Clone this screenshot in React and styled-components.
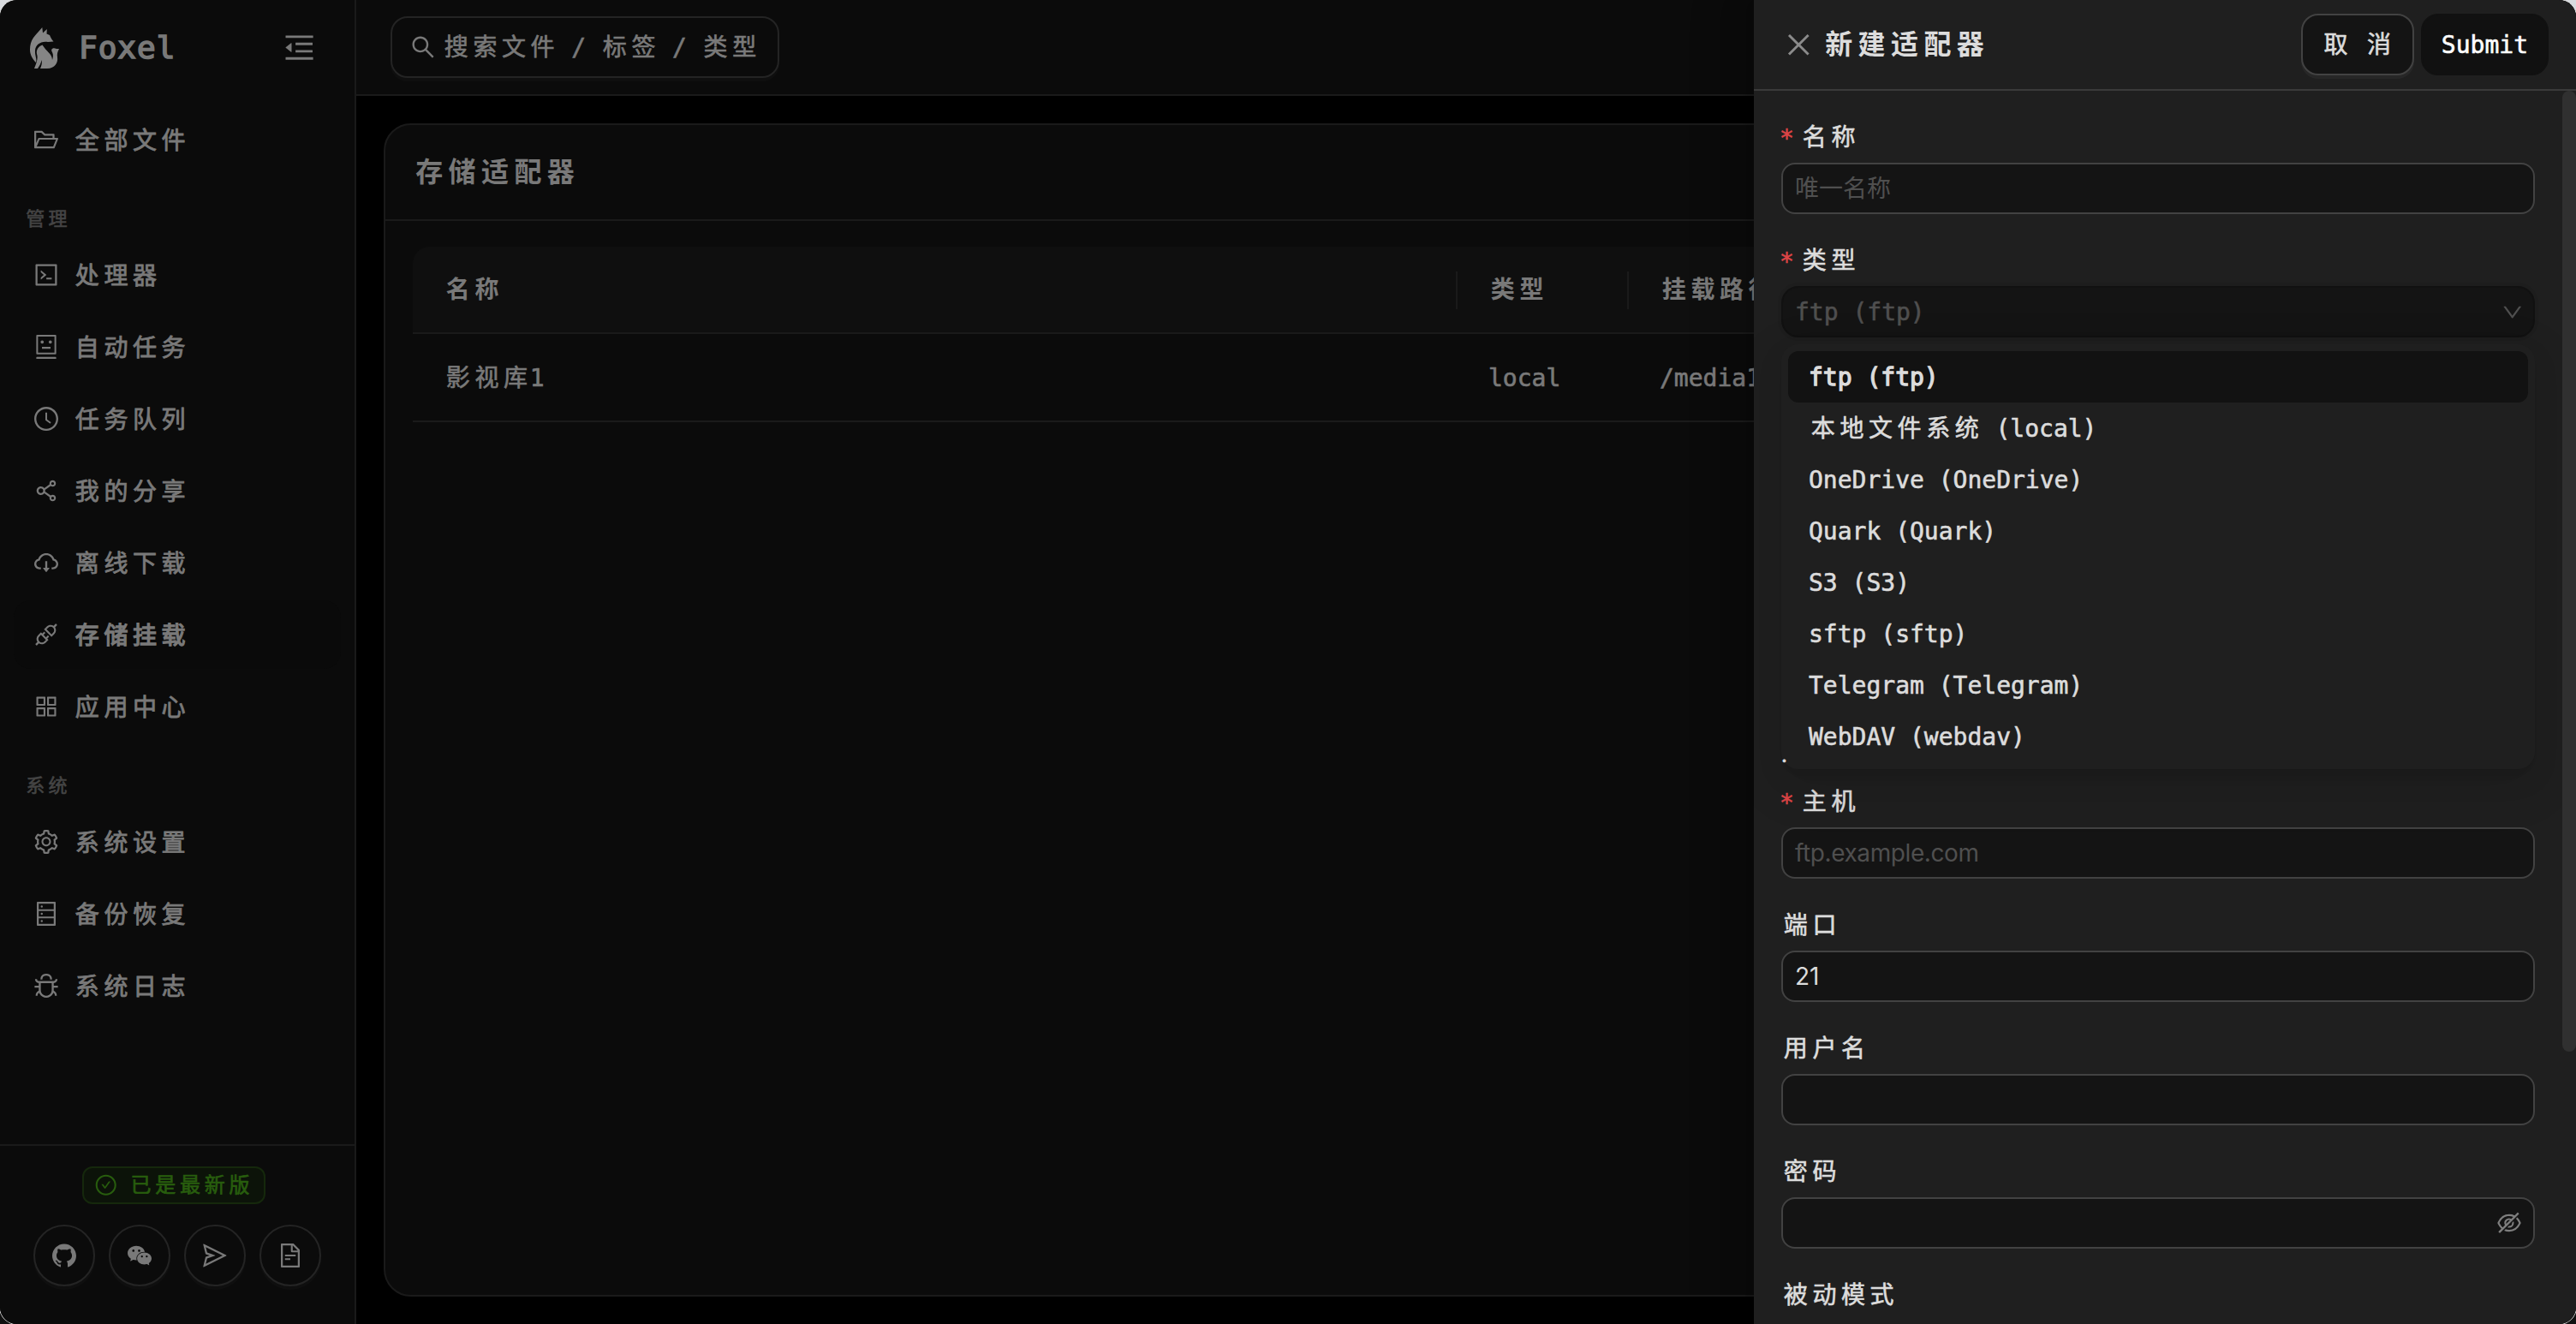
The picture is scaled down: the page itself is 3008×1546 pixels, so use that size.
import React from "react";
import styled, { createGlobalStyle } from "styled-components";
import {
  AiFillWechat,
  AiOutlineApi,
  AiOutlineAppstore,
  AiOutlineBug,
  AiOutlineCheckCircle,
  AiOutlineClockCircle,
  AiOutlineClose,
  AiOutlineCloudDownload,
  AiOutlineCode,
  AiOutlineDatabase,
  AiOutlineDown,
  AiOutlineEyeInvisible,
  AiOutlineFileText,
  AiOutlineFolderOpen,
  AiOutlineGithub,
  AiOutlineMenuFold,
  AiOutlineRobot,
  AiOutlineSearch,
  AiOutlineSend,
  AiOutlineSetting,
  AiOutlineShareAlt,
} from "react-icons/ai";

const GlobalStyle = createGlobalStyle`
  * {
    box-sizing: border-box;
  }

  body {
    margin: 0;
    background: linear-gradient(#d9dbdf 773px, #101010 773px);
    overflow: hidden;
    font-family: "DejaVu Sans Mono", "Noto Sans CJK SC", monospace;
    font-size: 28px;
    line-height: 44px;
    color: #dcdcdc;
    white-space: pre;
    -webkit-text-stroke: 0.6px;
  }

  svg {
    -webkit-text-stroke: 0;
  }
`;

const Window = styled.div`
  position: relative;
  display: flex;
  width: 3008px;
  height: 1546px;
  background: #000;
  border-radius: 20px;
  box-shadow: 0 0 0 1px #d0d0d0;
  overflow: hidden;
`;

// The Chinese glyphs sit in the middle of a cell that is two Latin letters wide
const Zh = styled.span`
  font-family: "Noto Sans CJK SC", sans-serif;
  line-height: 1;
  letter-spacing: 0.2em;
  margin-left: 0.1em;
  margin-right: -0.1em;
`;

function Text({ children }) {
  return children
    .split(/([\u4e00-\u9fff]+)/)
    .filter(Boolean)
    .map((part, index) =>
      /[\u4e00-\u9fff]/.test(part) ? (
        <Zh key={index}>{part}</Zh>
      ) : (
        <React.Fragment key={index}>{part}</React.Fragment>
      )
    );
}

const Icon = styled.span`
  display: inline-flex;
  align-items: center;
  justify-content: center;
  flex: none;
  width: ${(p) => p.$size || 28}px;
  height: ${(p) => p.$size || 28}px;

  svg {
    flex: none;
    width: ${(p) => ((p.$size || 28) * 8) / 7}px;
    height: ${(p) => ((p.$size || 28) * 8) / 7}px;
  }
`;

/* Sidebar */

const Sidebar = styled.aside`
  display: flex;
  flex-direction: column;
  flex: none;
  width: 416px;
  background: #141414;
  border-right: 2px solid #303030;
`;

const Brand = styled.div`
  display: flex;
  align-items: center;
  height: 112px;
  padding: 0 46px 0 28px;
`;

const Logo = styled.svg`
  width: 48px;
  height: 48px;
  fill: #fff;
  opacity: 0.95;
`;

const BrandName = styled.span`
  flex: 1;
  margin-left: 16px;
  font-size: 36px;
  letter-spacing: 1px;
  -webkit-text-stroke: 1.6px;
`;

const Menu = styled.nav`
  flex: 1;
  padding: 11px 16px;
`;

const GroupTitle = styled.div`
  height: 44px;
  margin: 29px 0 5px;
  padding: 2px 0 0 12px;
  font-size: 22px;
  color: #7c7c7c;
`;

const MenuItem = styled.div`
  display: flex;
  align-items: center;
  gap: 17px;
  height: 80px;
  margin-bottom: 4px;
  padding: 0 24px;
  border-radius: 20px;
  background: ${(p) => (p.$active ? "#131313" : "transparent")};
  -webkit-text-stroke: ${(p) => (p.$active ? "1.3px" : "0.8px")};
`;

const MenuText = styled.span`
  padding-top: 3px;
`;

const SidebarFooter = styled.div`
  display: flex;
  flex-direction: column;
  align-items: center;
  gap: 24px;
  height: 210px;
  padding-top: 24px;
  border-top: 2px solid #303030;
`;

const VersionTag = styled.div`
  display: flex;
  align-items: center;
  gap: 14px;
  height: 44px;
  margin-right: 8px;
  padding: 0 14px;
  border: 2px solid #274916;
  border-radius: 12px;
  background: #162312;
  color: #49aa19;
  font-size: 24px;
`;

const Links = styled.div`
  display: flex;
  gap: 16px;
`;

const RoundButton = styled.div`
  display: flex;
  align-items: center;
  justify-content: center;
  width: 72px;
  height: 72px;
  border: 2px solid #424242;
  border-radius: 50%;
  background: #141414;
  box-shadow: 0 4px 0 rgba(255, 255, 255, 0.04);
`;

/* Main area */

const Main = styled.main`
  display: flex;
  flex-direction: column;
  flex: 1;
`;

const TopBar = styled.header`
  display: flex;
  align-items: center;
  height: 112px;
  padding: 0 40px;
  background: #141414;
  border-bottom: 2px solid #303030;
`;

const SearchButton = styled.div`
  display: flex;
  align-items: center;
  gap: 8px;
  height: 72px;
  padding: 0 22px;
  border: 2px solid #424242;
  border-radius: 20px;
  box-shadow: 0 4px 0 rgba(255, 255, 255, 0.04);
`;

const SearchText = styled.span`
  padding-top: 2px;
`;

const Card = styled.section`
  flex: 1;
  margin: 32px;
  border: 2px solid #303030;
  border-radius: 32px;
  background: #141414;
`;

const CardTitle = styled.div`
  display: flex;
  align-items: center;
  height: 112px;
  padding: 0 32px;
  border-bottom: 2px solid #303030;
  font-size: 32px;
  font-weight: 600;
  -webkit-text-stroke: 0;
`;

const Table = styled.div`
  margin: 30px 32px;
`;

const Row = styled.div`
  display: grid;
  grid-template-columns: 1220px 200px 1fr;
  align-items: center;
  height: ${(p) => (p.$head ? 102 : 103)}px;
  padding-top: 2px;
  border-bottom: 2px solid #303030;
  border-radius: ${(p) => (p.$head ? "20px 20px 0 0" : 0)};
  background: ${(p) => (p.$head ? "#1d1d1d" : "transparent")};
  font-weight: ${(p) => (p.$head ? 600 : 400)};
  -webkit-text-stroke: ${(p) => (p.$head ? 0 : "0.6px")};
`;

const Cell = styled.div`
  padding-left: 36px;
  border-right: ${(p) => (p.$divider ? "2px solid #303030" : "0")};
`;

/* Drawer */

const Mask = styled.div`
  position: absolute;
  inset: 0;
  background: rgba(0, 0, 0, 0.45);
`;

const Drawer = styled.aside`
  position: absolute;
  top: 0;
  right: 0;
  bottom: 0;
  width: 960px;
  background: #1f1f1f;
  box-shadow: -12px 0 32px 0 rgba(0, 0, 0, 0.08),
    -6px 0 12px -8px rgba(0, 0, 0, 0.12), -18px 0 56px 16px rgba(0, 0, 0, 0.05);
`;

const DrawerHeader = styled.div`
  display: flex;
  align-items: center;
  height: 106px;
  padding: 0 32px 0 36px;
  border-bottom: 2px solid #3a3a3a;

  & > :first-child {
    color: #8b8b8b;
  }
`;

const DrawerTitle = styled.div`
  flex: 1;
  margin-left: 12px;
  font-size: 32px;
  font-weight: 600;
  -webkit-text-stroke: 0;
`;

const Button = styled.div`
  height: 72px;
  margin-left: 8px;
  padding: 0 22px;
  border: 2px solid ${(p) => (p.$primary ? "#111" : "#424242")};
  border-radius: 20px;
  background: ${(p) => (p.$primary ? "#111" : "#141414")};
  color: ${(p) => (p.$primary ? "#fff" : "#dcdcdc")};
  box-shadow: 0 4px 0 rgba(255, 255, 255, ${(p) => (p.$primary ? 0 : 0.04)});
  line-height: 70px;
`;

const DrawerBody = styled.div`
  display: flex;
  height: 1440px;
`;

const Form = styled.div`
  flex: 1;
  padding: 32px 32px 0;
  overflow: hidden;
`;

const ScrollThumb = styled.div`
  width: 16px;
  height: 1122px;
  border-radius: 8px;
  background: #303030;
`;

const Field = styled.div`
  position: relative;
  margin-bottom: 32px;
`;

const Label = styled.div`
  display: flex;
  height: 44px;
  margin-bottom: 8px;
  padding-top: 1px;
`;

const Star = styled.span`
  width: 24px;
  margin-left: -2px;
  padding-top: 1px;
  color: #dc4446;
`;

const Input = styled.div`
  display: flex;
  align-items: center;
  justify-content: space-between;
  height: 60px;
  padding: 0 14px;
  border: 2px solid #424242;
  border-radius: 16px;
  background: #141414;
  font-family: Inter, "Noto Sans CJK SC", sans-serif;
  letter-spacing: ${(p) => (p.$tight ? "-0.4px" : "0")};
  -webkit-text-stroke: 0;
  color: ${(p) => (p.$placeholder ? "#4f4f4f" : "#dcdcdc")};
`;

const Select = styled(Input)`
  padding-top: 2px;
  padding-right: 12px;
  border-color: #111;
  border-radius: 20px;
  box-shadow: 0 0 0 4px rgba(0, 0, 0, 0.06);
  font-family: "DejaVu Sans Mono", monospace;
  -webkit-text-stroke: 0.6px;
`;

const EyeIcon = styled(Icon)`
  color: #7e7e7e;
`;

const Options = styled.div`
  position: absolute;
  top: 120px;
  left: 0;
  right: 0;
  z-index: 1;
  padding: 8px;
  border-radius: 20px;
  background: #1f1f1f;
  box-shadow: 0 12px 32px 0 rgba(0, 0, 0, 0.08),
    0 6px 12px -8px rgba(0, 0, 0, 0.12), 0 18px 56px 16px rgba(0, 0, 0, 0.05);
`;

const Option = styled.div`
  height: 60px;
  padding: 9px 24px 7px;
  border-radius: 12px;
  background: ${(p) => (p.$selected ? "#121212" : "transparent")};
  -webkit-text-stroke: ${(p) => (p.$selected ? "1.3px" : "0.6px")};
`;

// Tail of the hint line, showing at the rounded corner of the open list
const Hint = styled.div`
  position: relative;
  z-index: 2;
  height: 520px;
  margin-top: -32px;
  padding-top: 466px;
  font-family: Inter, sans-serif;
  font-size: 24px;
`;

const managePages = [
  { icon: AiOutlineCode, name: "处理器" },
  { icon: AiOutlineRobot, name: "自动任务" },
  { icon: AiOutlineClockCircle, name: "任务队列" },
  { icon: AiOutlineShareAlt, name: "我的分享" },
  { icon: AiOutlineCloudDownload, name: "离线下载" },
  { icon: AiOutlineApi, name: "存储挂载", active: true },
  { icon: AiOutlineAppstore, name: "应用中心" },
];

const systemPages = [
  { icon: AiOutlineSetting, name: "系统设置" },
  { icon: AiOutlineDatabase, name: "备份恢复" },
  { icon: AiOutlineBug, name: "系统日志" },
];

const links = [
  AiOutlineGithub,
  AiFillWechat,
  AiOutlineSend,
  AiOutlineFileText,
];

const adapterTypes = [
  "ftp (ftp)",
  "本地文件系统 (local)",
  "OneDrive (OneDrive)",
  "Quark (Quark)",
  "S3 (S3)",
  "sftp (sftp)",
  "Telegram (Telegram)",
  "WebDAV (webdav)",
];

function Page({ page }) {
  const PageIcon = page.icon;
  return (
    <MenuItem $active={page.active}>
      <Icon>
        <PageIcon />
      </Icon>
      <MenuText>
        <Text>{page.name}</Text>
      </MenuText>
    </MenuItem>
  );
}

function FieldLabel({ required, children }) {
  return (
    <Label>
      {required && <Star>*</Star>}
      <span>
        <Text>{children}</Text>
      </span>
    </Label>
  );
}

function App() {
  return (
    <>
      <GlobalStyle />
      <Window>
        <Sidebar>
          <Brand>
            <Logo viewBox="0 0 48 48">
              <path d="M21.3 0 C18 4 14 8 11 12 C8 16 7 21 7 26 C7 32 10 37 14 41 C15.5 38 12.5 32 13 27 C13.5 20 20 15.5 28 17 L34.5 16.5 C32 14 31 11 30 9 L26.5 7.5 L26.8 2 L22 6.5 Z" />
              <path d="M21.5 20.5 C17 22 14 26 15 31 C17 36 14 43 12 48 L16 48 C18 45 20 42 20.5 38 C21.5 41 20.5 45 19 48 L27 48 C36 48 40 41 39 35 C38.5 31 39 29 41 25 L38 25 C33 23 31 26 33 29 C34.5 32 34 35 33 38 C33 31 26 28 21.5 20.5 Z" />
            </Logo>
            <BrandName>Foxel</BrandName>
            <Icon $size={36}>
              <AiOutlineMenuFold />
            </Icon>
          </Brand>
          <Menu>
            <Page page={{ icon: AiOutlineFolderOpen, name: "全部文件" }} />
            <GroupTitle>
              <Text>管理</Text>
            </GroupTitle>
            {managePages.map((page) => (
              <Page key={page.name} page={page} />
            ))}
            <GroupTitle>
              <Text>系统</Text>
            </GroupTitle>
            {systemPages.map((page) => (
              <Page key={page.name} page={page} />
            ))}
          </Menu>
          <SidebarFooter>
            <VersionTag>
              <Icon $size={24}>
                <AiOutlineCheckCircle />
              </Icon>
              <span>
                <Text>已是最新版</Text>
              </span>
            </VersionTag>
            <Links>
              {links.map((LinkIcon, index) => (
                <RoundButton key={index}>
                  <Icon>
                    <LinkIcon />
                  </Icon>
                </RoundButton>
              ))}
            </Links>
          </SidebarFooter>
        </Sidebar>

        <Main>
          <TopBar>
            <SearchButton>
              <Icon>
                <AiOutlineSearch />
              </Icon>
              <SearchText>
                <Text>搜索文件 / 标签 / 类型</Text>
              </SearchText>
            </SearchButton>
          </TopBar>
          <Card>
            <CardTitle>
              <span>
                <Text>存储适配器</Text>
              </span>
            </CardTitle>
            <Table>
              <Row $head>
                <Cell $divider>
                  <Text>名称</Text>
                </Cell>
                <Cell $divider>
                  <Text>类型</Text>
                </Cell>
                <Cell>
                  <Text>挂载路径</Text>
                </Cell>
              </Row>
              <Row>
                <Cell>
                  <Text>影视库1</Text>
                </Cell>
                <Cell>local</Cell>
                <Cell>/media1</Cell>
              </Row>
            </Table>
          </Card>
        </Main>

        <Mask />
        <Drawer>
          <DrawerHeader>
            <Icon $size={32}>
              <AiOutlineClose />
            </Icon>
            <DrawerTitle>
              <Text>新建适配器</Text>
            </DrawerTitle>
            <Button>
              <Text>取 消</Text>
            </Button>
            <Button $primary>Submit</Button>
          </DrawerHeader>
          <DrawerBody>
            <Form>
              <Field>
                <FieldLabel required>名称</FieldLabel>
                <Input $placeholder>唯一名称</Input>
              </Field>
              <Field>
                <FieldLabel required>类型</FieldLabel>
                <Select $placeholder>
                  ftp (ftp)
                  <Icon $size={24}>
                    <AiOutlineDown />
                  </Icon>
                </Select>
                <Options>
                  {adapterTypes.map((type, index) => (
                    <Option key={type} $selected={index === 0}>
                      <Text>{type}</Text>
                    </Option>
                  ))}
                </Options>
              </Field>
              <Hint>.</Hint>
              <Field>
                <FieldLabel required>主机</FieldLabel>
                <Input $placeholder $tight>
                  ftp.example.com
                </Input>
              </Field>
              <Field>
                <FieldLabel>端口</FieldLabel>
                <Input>21</Input>
              </Field>
              <Field>
                <FieldLabel>用户名</FieldLabel>
                <Input />
              </Field>
              <Field>
                <FieldLabel>密码</FieldLabel>
                <Input>
                  <span />
                  <EyeIcon>
                    <AiOutlineEyeInvisible />
                  </EyeIcon>
                </Input>
              </Field>
              <Field>
                <FieldLabel>被动模式</FieldLabel>
              </Field>
            </Form>
            <ScrollThumb />
          </DrawerBody>
        </Drawer>
      </Window>
    </>
  );
}

export default App;
